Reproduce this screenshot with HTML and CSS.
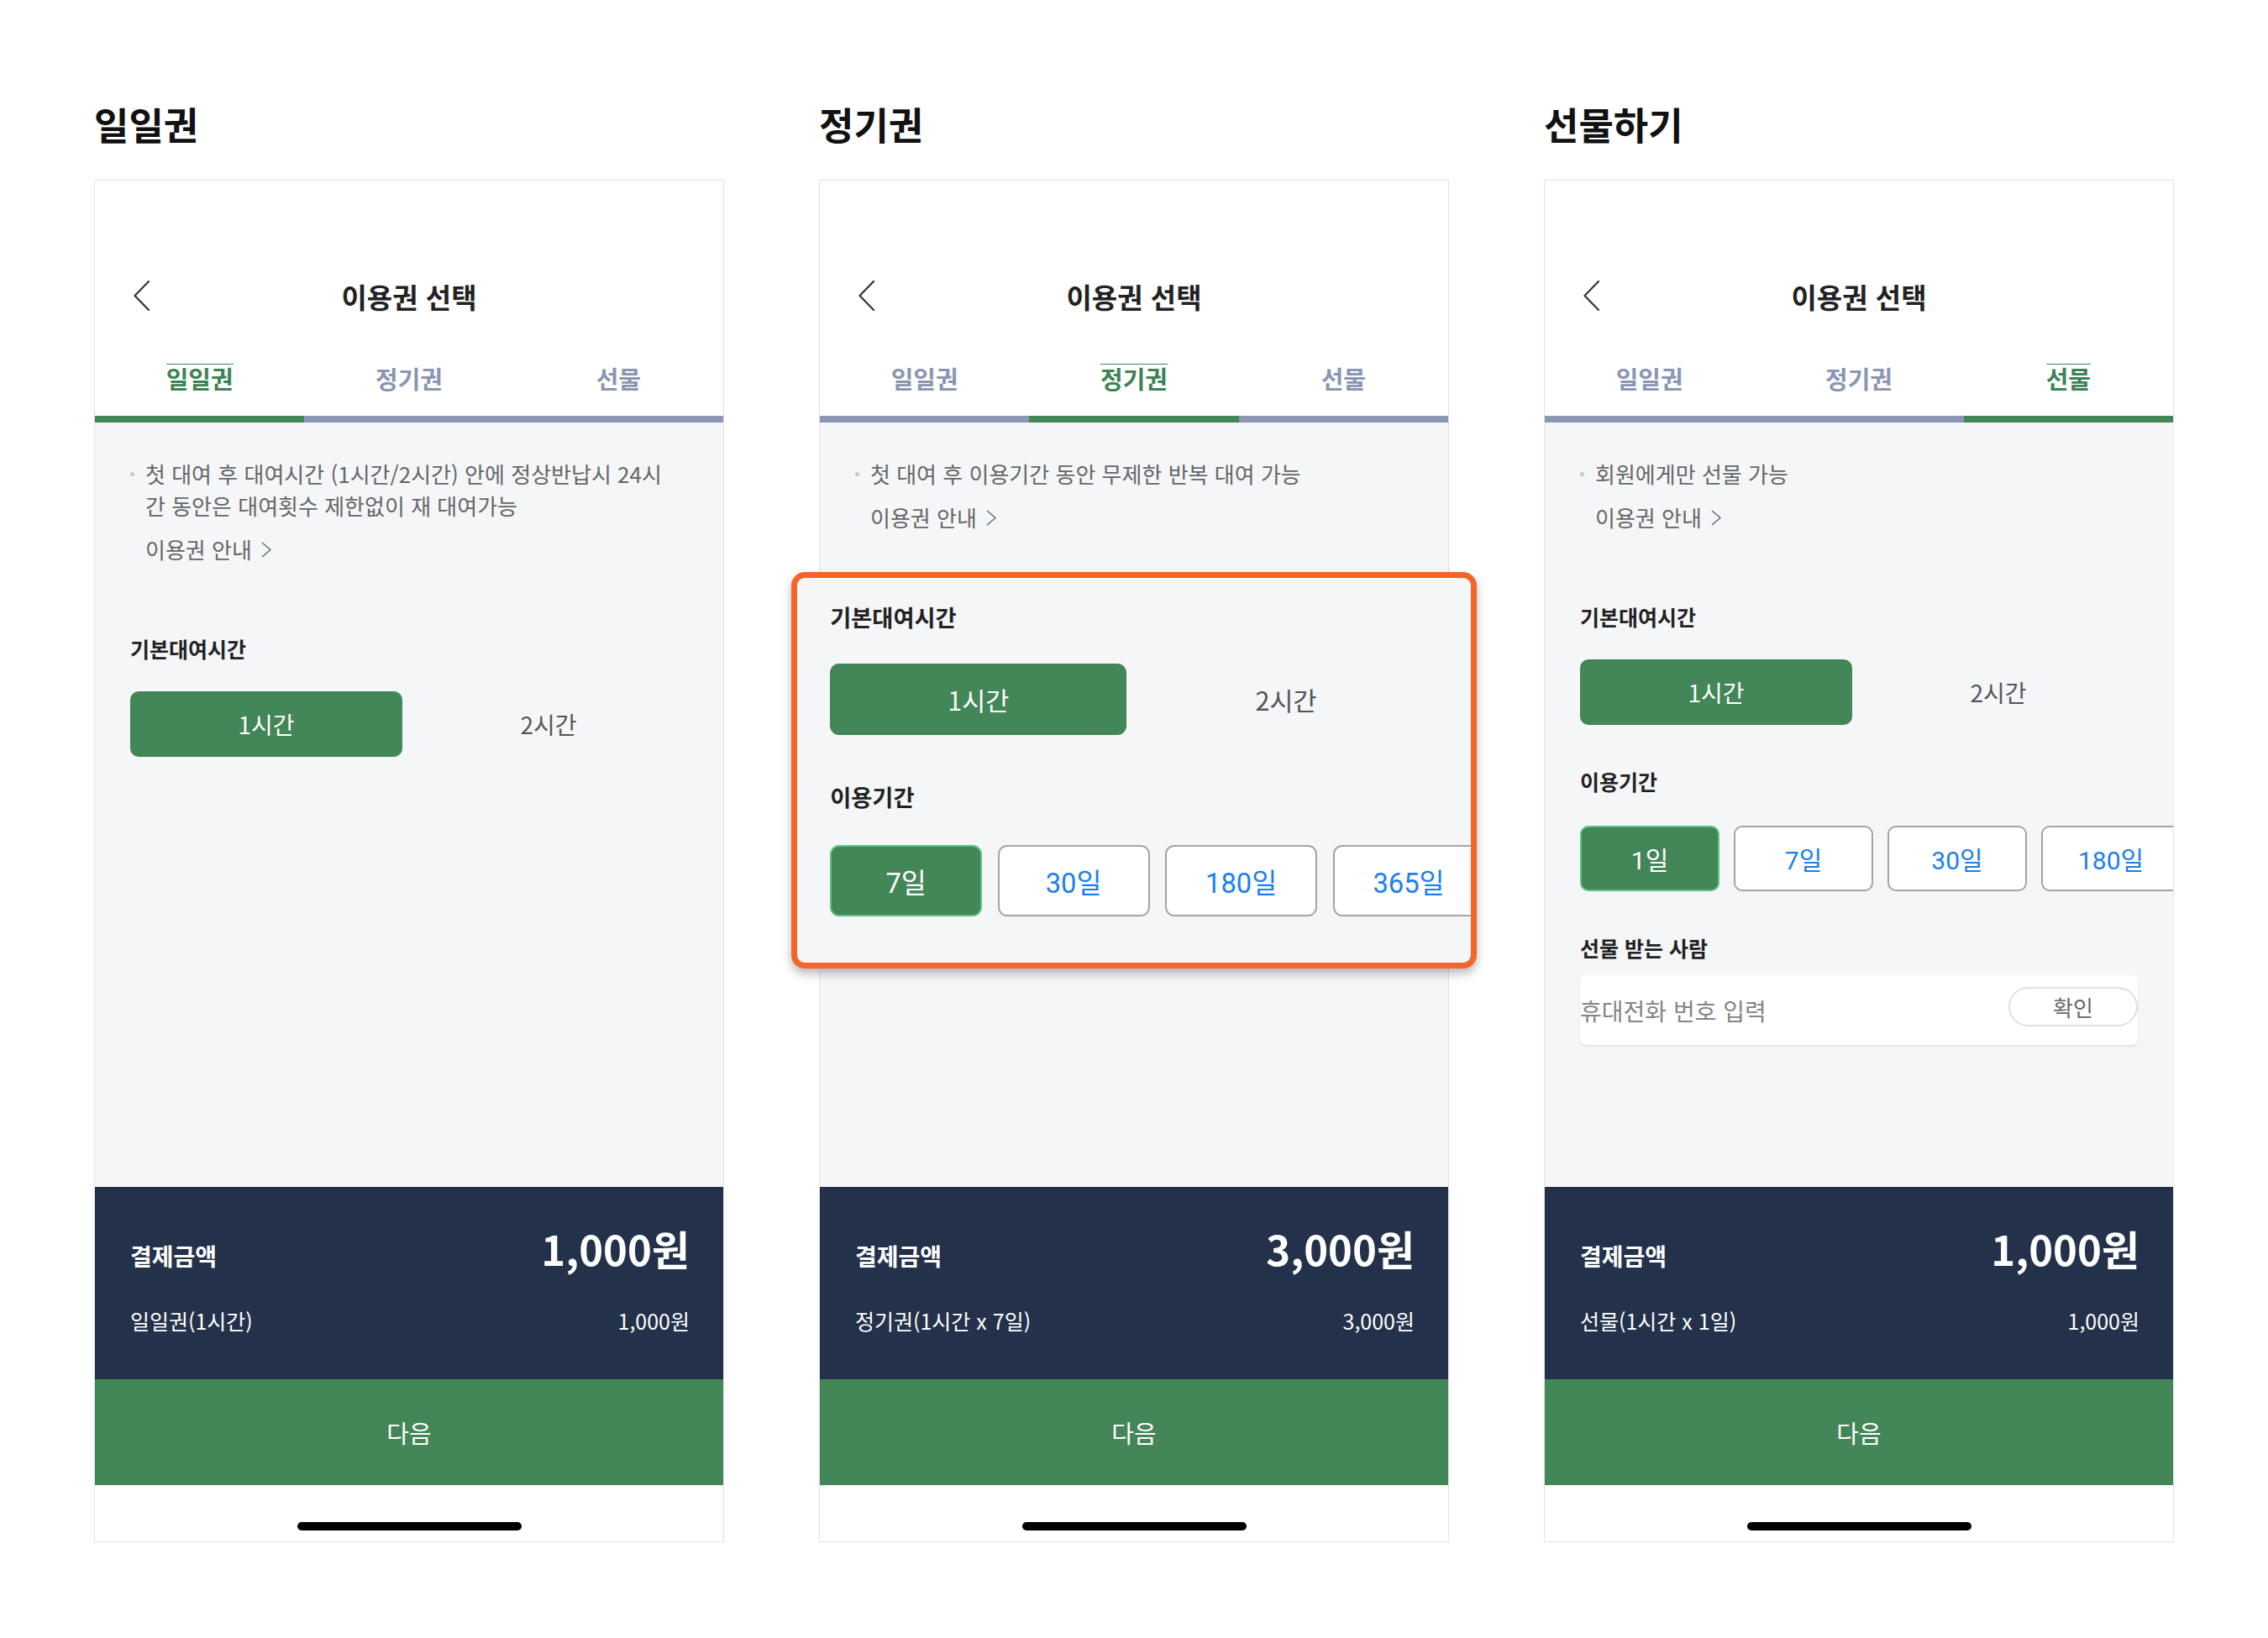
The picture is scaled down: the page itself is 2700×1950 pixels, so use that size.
FILE: index.html
```html
<!DOCTYPE html>
<html lang="ko">
<head>
<meta charset="utf-8">
<title>이용권 선택</title>
<link rel="stylesheet" href="styles.css">
</head>
<body>
<div class="page">

  <section class="column">
    <h2 class="page-title">일일권</h2>
    <div class="phone">
      <header class="app-header">
        <div class="nav-row">
          <span class="back"><svg width="20" height="36" viewBox="0 0 20 36"><polyline points="18,1 1.5,18 18,35" fill="none" stroke="#333" stroke-width="2.2" stroke-linecap="round" stroke-linejoin="round"/></svg></span>
          <h1 class="nav-title">이용권 선택</h1>
          <span></span>
        </div>
        <nav class="tabs">
          <div class="tab active"><span class="tab-label">일일권</span></div>
          <div class="tab"><span class="tab-label">정기권</span></div>
          <div class="tab"><span class="tab-label">선물</span></div>
        </nav>
      </header>
      <div class="body">
        <div class="info">
          <p class="note"><span class="dot"></span><span>첫 대여 후 대여시간 (1시간/2시간) 안에 정상반납시 24시<br>간 동안은 대여횟수 제한없이 재 대여가능</span></p>
          <a class="guide">이용권 안내 <svg width="14" height="19" viewBox="0 0 14 19"><polyline points="2,1 12,9.5 2,18" fill="none" stroke="#666" stroke-width="1.5" stroke-linejoin="round"/></svg></a>
        </div>
        <div class="section">
          <h3 class="sec-title">기본대여시간</h3>
          <div class="hours"><button class="hour on">1시간</button><button class="hour">2시간</button></div>
        </div>
      </div>
      <div class="pay">
        <div class="pay-row"><span class="pay-label">결제금액</span><span class="pay-total">1,000원</span></div>
        <div class="pay-detail"><span>일일권(1시간)</span><span>1,000원</span></div>
      </div>
      <button class="next">다음</button>
      <div class="home"><span class="bar"></span></div>
    </div>
  </section>

  <section class="column">
    <h2 class="page-title">정기권</h2>
    <div class="phone">
      <header class="app-header">
        <div class="nav-row">
          <span class="back"><svg width="20" height="36" viewBox="0 0 20 36"><polyline points="18,1 1.5,18 18,35" fill="none" stroke="#333" stroke-width="2.2" stroke-linecap="round" stroke-linejoin="round"/></svg></span>
          <h1 class="nav-title">이용권 선택</h1>
          <span></span>
        </div>
        <nav class="tabs">
          <div class="tab"><span class="tab-label">일일권</span></div>
          <div class="tab active"><span class="tab-label">정기권</span></div>
          <div class="tab"><span class="tab-label">선물</span></div>
        </nav>
      </header>
      <div class="body body-rel">
        <div class="info">
          <p class="note"><span class="dot"></span><span>첫 대여 후 이용기간 동안 무제한 반복 대여 가능</span></p>
          <a class="guide">이용권 안내 <svg width="14" height="19" viewBox="0 0 14 19"><polyline points="2,1 12,9.5 2,18" fill="none" stroke="#666" stroke-width="1.5" stroke-linejoin="round"/></svg></a>
        </div>
        <div class="callout">
          <div class="callout-zoom">
            <div class="section first">
              <h3 class="sec-title">기본대여시간</h3>
              <div class="hours"><button class="hour on">1시간</button><button class="hour">2시간</button></div>
            </div>
            <div class="section">
              <h3 class="sec-title sec-days">이용기간</h3>
              <div class="days-wrap">
                <div class="days">
                  <button class="day on">7일</button><button class="day">30일</button><button class="day">180일</button><button class="day">365일</button>
                </div>
              </div>
            </div>
          </div>
        </div>
      </div>
      <div class="pay">
        <div class="pay-row"><span class="pay-label">결제금액</span><span class="pay-total">3,000원</span></div>
        <div class="pay-detail"><span>정기권(1시간 x 7일)</span><span>3,000원</span></div>
      </div>
      <button class="next">다음</button>
      <div class="home"><span class="bar"></span></div>
    </div>
  </section>

  <section class="column">
    <h2 class="page-title">선물하기</h2>
    <div class="phone">
      <header class="app-header">
        <div class="nav-row">
          <span class="back"><svg width="20" height="36" viewBox="0 0 20 36"><polyline points="18,1 1.5,18 18,35" fill="none" stroke="#333" stroke-width="2.2" stroke-linecap="round" stroke-linejoin="round"/></svg></span>
          <h1 class="nav-title">이용권 선택</h1>
          <span></span>
        </div>
        <nav class="tabs">
          <div class="tab"><span class="tab-label">일일권</span></div>
          <div class="tab"><span class="tab-label">정기권</span></div>
          <div class="tab active"><span class="tab-label">선물</span></div>
        </nav>
      </header>
      <div class="body">
        <div class="info">
          <p class="note"><span class="dot"></span><span>회원에게만 선물 가능</span></p>
          <a class="guide">이용권 안내 <svg width="14" height="19" viewBox="0 0 14 19"><polyline points="2,1 12,9.5 2,18" fill="none" stroke="#666" stroke-width="1.5" stroke-linejoin="round"/></svg></a>
        </div>
        <div class="section">
          <h3 class="sec-title">기본대여시간</h3>
          <div class="hours"><button class="hour on">1시간</button><button class="hour">2시간</button></div>
        </div>
        <div class="section">
          <h3 class="sec-title sec-days">이용기간</h3>
          <div class="days-wrap">
            <div class="days">
              <button class="day on">1일</button><button class="day">7일</button><button class="day">30일</button><button class="day">180일</button>
            </div>
          </div>
        </div>
        <div class="section">
          <h3 class="sec-title sec-gift">선물 받는 사람</h3>
          <div class="phone-input">
            <input type="text" placeholder="휴대전화 번호 입력">
            <button class="confirm">확인</button>
          </div>
        </div>
      </div>
      <div class="pay">
        <div class="pay-row"><span class="pay-label">결제금액</span><span class="pay-total">1,000원</span></div>
        <div class="pay-detail"><span>선물(1시간 x 1일)</span><span>1,000원</span></div>
      </div>
      <button class="next">다음</button>
      <div class="home"><span class="bar"></span></div>
    </div>
  </section>

</div>
</body>
</html>
```

FILE: styles.css
```css
* { box-sizing: border-box; }

html, body {
  margin: 0;
  padding: 0;
  background: #ffffff;
}

body {
  font-family: "Noto Sans CJK KR", "Noto Sans", sans-serif;
  color: #222;
}

button, input {
  font: inherit;
  color: inherit;
  margin: 0;
}

.page {
  display: flex;
  gap: 113px;
  padding: 118px 0 0 112px;
}

.column {
  width: 750px;
  flex: 0 0 750px;
}

.page-title {
  margin: 0 0 36px;
  font-size: 45px;
  line-height: 60px;
  font-weight: 700;
  color: #111;
}

.phone {
  width: 750px;
  height: 1622px;
  border: 1px solid #e2e2e2;
  background: #fff;
  display: flex;
  flex-direction: column;
}

/* header */
.app-header {
  padding-top: 90px;
  background: #fff;
}

.nav-row {
  height: 100px;
  display: grid;
  grid-template-columns: 1fr auto 1fr;
  align-items: center;
}

.back {
  padding-left: 46px;
  display: flex;
  margin-bottom: 6px;
}

.nav-title {
  margin: 0 0 5px;
  font-size: 33px;
  font-weight: 700;
  color: #222;
  line-height: 40px;
}

.tabs {
  display: flex;
}

.tab {
  flex: 1;
  height: 98px;
  border-bottom: 8px solid #8a96b2;
  display: flex;
  align-items: center;
  justify-content: center;
}

.tab-label {
  position: relative;
  display: inline-block;
  font-size: 29px;
  line-height: 1;
  font-weight: 700;
  color: #8a96b2;
}

.tab.active { border-bottom-color: #438657; }
.tab.active .tab-label { color: #3e8355; }
.tab.active .tab-label::before {
  content: "";
  position: absolute;
  left: 0;
  right: 0;
  top: -3px;
  height: 1.5px;
  background: currentColor;
}

/* body */
.body {
  flex: 1;
  background: #f5f6f8;
  padding: 42px 42px 0;
  overflow: hidden;
}

.body-rel {
  position: relative;
  overflow: visible;
}

.info { margin: 0; }

.note {
  margin: 0;
  display: flex;
  font-size: 26px;
  line-height: 38px;
  color: #666;
}

.dot {
  flex: 0 0 18px;
  height: 5px;
  margin-top: 17px;
}
.dot::before {
  content: "";
  display: block;
  width: 5px;
  height: 5px;
  border-radius: 50%;
  background: #c9c9c9;
}

.guide {
  margin-top: 14px;
  padding-left: 18px;
  display: flex;
  align-items: center;
  gap: 10px;
  font-size: 26px;
  line-height: 38px;
  color: #666;
}

.section { margin-top: 48px; }
.info + .section { margin-top: 80px; }

.sec-title {
  margin: 0 0 32px;
  font-size: 25px;
  line-height: 38px;
  font-weight: 700;
  color: #222;
}
.sec-days { margin-bottom: 34px; }
.sec-gift { margin-bottom: 14px; }

.hours {
  display: grid;
  grid-template-columns: 324px 324px;
  gap: 12px;
}

.hour {
  height: 78px;
  border: none;
  border-radius: 10px;
  background: transparent;
  font-size: 28px;
  color: #555;
  display: flex;
  align-items: center;
  justify-content: center;
}
.hour.on {
  background: #438657;
  color: #fff;
}

.days-wrap {
  margin-right: -42px;
  overflow: hidden;
}

.days {
  display: flex;
  gap: 17px;
}

.day {
  flex: 0 0 166px;
  height: 78px;
  border: 2px solid #a4a4a4;
  border-radius: 10px;
  background: #fff;
  color: #1a7ff0;
  font-family: Roboto, "Noto Sans CJK KR", sans-serif;
  font-size: 30px;
  display: flex;
  align-items: center;
  justify-content: center;
}
.day.on {
  background: #438657;
  border-color: #5cc480;
  color: #fff;
}

.phone-input {
  height: 83px;
  background: #fff;
  border-radius: 8px;
  box-shadow: 0 2px 3px rgba(0, 0, 0, 0.08);
  display: flex;
  align-items: flex-start;
}

.phone-input input {
  flex: 1;
  min-width: 0;
  height: 83px;
  border: none;
  background: transparent;
  padding: 0;
  font-size: 28px;
  outline: none;
}
.phone-input input::placeholder { color: #858585; }

.confirm {
  margin-top: 14px;
  width: 154px;
  height: 47px;
  border: 2px solid #e0e0e0;
  border-radius: 24px;
  background: #fff;
  color: #666;
  font-size: 26px;
  line-height: 1;
  display: flex;
  align-items: center;
  justify-content: center;
}

/* callout (magnified overlay on card 2) */
.callout {
  position: absolute;
  left: -34px;
  top: 178px;
  width: 816px;
  border: 7px solid #f4652b;
  border-radius: 16px;
  background: #f5f6f8;
  box-shadow: 0 6px 12px rgba(0, 0, 0, 0.28);
  overflow: hidden;
}

.callout-zoom {
  zoom: 1.09;
  padding: 24px 0 50px 36px;
}

.callout-zoom .section.first { margin-top: 0; }

/* payment */
.pay {
  height: 229px;
  background: #23324a;
  color: #fff;
  padding: 43px 40px 0 42px;
}

.pay-row {
  display: flex;
  justify-content: space-between;
  align-items: baseline;
  line-height: 60px;
}

.pay-label {
  font-size: 28px;
  font-weight: 700;
}

.pay-total {
  font-size: 49px;
  font-weight: 700;
}

.pay-detail {
  margin-top: 28px;
  display: flex;
  justify-content: space-between;
  font-size: 25px;
  line-height: 38px;
}

.next {
  height: 126px;
  flex: 0 0 126px;
  border: none;
  background: #438657;
  color: #fff;
  font-size: 29px;
  display: flex;
  align-items: center;
  justify-content: center;
  width: 100%;
}

.home {
  height: 67px;
  flex: 0 0 67px;
  display: flex;
  justify-content: center;
  padding-top: 44px;
}

.bar {
  display: block;
  width: 267px;
  height: 10px;
  border-radius: 5px;
  background: #000;
}
```
